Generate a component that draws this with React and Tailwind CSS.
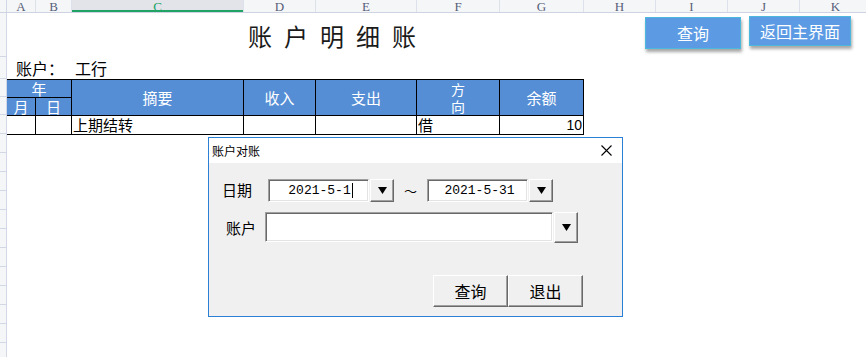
import React from "react";

const cols = [
  { id: "A", w: "w-[29px]" },
  { id: "B", w: "w-[36px]" },
  { id: "C", w: "w-[172px]", active: true },
  { id: "D", w: "w-[72px]" },
  { id: "E", w: "w-[101px]" },
  { id: "F", w: "w-[83px]" },
  { id: "G", w: "w-[84px]" },
  { id: "H", w: "w-[72px]" },
  { id: "I", w: "w-[72px]" },
  { id: "J", w: "w-[72px]" },
  { id: "K", w: "w-[72px]" },
];

const rowHeights = ["h-[44px]", "h-[22px]", "h-[18px]", "h-[18px]", "h-[19px]", "h-[19px]", "h-[19px]", "h-[19px]", "h-[19px]", "h-[19px]", "h-[19px]", "h-[19px]", "h-[19px]", "h-[19px]", "h-[19px]", "h-[19px]", "h-[19px]", "h-[19px]"];

const cjk = "font-['Noto_Sans_CJK_SC',sans-serif]";

const Arrow = () => (
  <svg width="9" height="7" viewBox="0 0 9 7">
    <polygon points="0,0 9,0 4.5,7" fill="#000" />
  </svg>
);

const DropBtn = ({ h }) => (
  <div
    className={`w-[24px] ${h} ml-px shrink-0 flex items-center justify-center bg-[#f0f0f0] border border-t-white border-l-white border-r-[#696969] border-b-[#696969] shadow-[inset_-1px_-1px_0_#a0a0a0]`}
  >
    <Arrow />
  </div>
);

const Field = ({ w, h, children }) => (
  <div
    className={`${w} ${h} shrink-0 flex items-center justify-center bg-white border border-t-[#a0a0a0] border-l-[#a0a0a0] border-r-white border-b-white shadow-[inset_1px_1px_0_#696969,inset_-1px_-1px_0_#e3e3e3] font-['Liberation_Mono',monospace] text-[13px] text-black`}
  >
    {children}
  </div>
);

const WinButton = ({ children }) => (
  <div className="w-[75px] h-[32px] flex items-center justify-center bg-[#f0f0f0] border border-t-white border-l-white border-r-[#696969] border-b-[#696969] shadow-[inset_-1px_-1px_0_#a0a0a0] text-[16px] text-black">
    {children}
  </div>
);

const App = () => {
  return (
    <div className={`relative w-[866px] h-[357px] overflow-hidden bg-white ${cjk}`}>
      {/* column headers */}
      <div className="flex h-[13px] bg-[#f5f6f8] border-b border-[#cdd3e0]">
        <div className="w-[7px] shrink-0 border-r border-[#d3d8e6]" />
        {cols.map((c) => (
          <div
            key={c.id}
            className={`${c.w} shrink-0 flex items-center justify-center border-r border-[#dde1ea] font-['Liberation_Serif',serif] text-[13px] leading-none ${
              c.active
                ? "bg-[#e2e4e9] text-[#21a366] shadow-[inset_0_-2px_0_#21a366]"
                : "text-[#556078]"
            }`}
          >
            {c.id}
          </div>
        ))}
      </div>

      <div className="flex">
        {/* row gutter */}
        <div className="w-[7px] shrink-0 bg-[#f5f6f8] border-r border-[#d3d8e6] flex flex-col">
          {rowHeights.map((h, i) => (
            <div key={i} className={`${h} shrink-0 border-b border-[#d3d8e6]`} />
          ))}
        </div>

        <div className="flex-1">
          {/* title row */}
          <div className="flex h-[44px]">
            <div className="w-[577px] shrink-0 pl-[241px] pt-[8px] text-[24px] leading-[30px] tracking-[12px] text-[#1a1a1a]">
              账户明细账
            </div>
            <button className="ml-[61px] mt-[4px] w-[96px] h-[32px] shrink-0 bg-[#5c9be4] border border-[#4cb8dc] shadow-[1px_3px_3px_rgba(0,0,0,0.35)] text-white text-[16px]">
              查询
            </button>
            <button className="ml-[8px] mt-[3px] w-[102px] h-[30px] shrink-0 bg-[#5c9be4] border border-[#4cb8dc] shadow-[1px_3px_3px_rgba(0,0,0,0.35)] text-white text-[16px]">
              返回主界面
            </button>
          </div>

          {/* account row */}
          <div className="flex items-end h-[22px] pb-[1px] text-[16px] leading-[20px] text-black">
            <span className="ml-[9px] w-[59px]">账户：</span>
            <span>工行</span>
          </div>

          {/* table */}
          <div className="grid grid-cols-[29px_36px_172px_72px_101px_83px_84px] grid-rows-[18px_18px_19px] border-t border-black w-[577px] text-[15px] leading-none">
            <div className="col-span-2 bg-[#558ed5] text-white border-r border-b border-black flex items-center justify-center">年</div>
            <div className="row-span-2 bg-[#558ed5] text-white border-r border-b border-black flex items-center justify-center">摘要</div>
            <div className="row-span-2 bg-[#558ed5] text-white border-r border-b border-black flex items-center justify-center">收入</div>
            <div className="row-span-2 bg-[#558ed5] text-white border-r border-b border-black flex items-center justify-center">支出</div>
            <div className="row-span-2 bg-[#558ed5] text-white border-r border-b border-black flex flex-col items-center justify-center text-[14px] leading-[17px]">
              <span>方</span>
              <span>向</span>
            </div>
            <div className="row-span-2 bg-[#558ed5] text-white border-r border-b border-black flex items-center justify-center">余额</div>
            <div className="bg-[#558ed5] text-white border-r border-b border-black flex items-center justify-center">月</div>
            <div className="bg-[#558ed5] text-white border-r border-b border-black flex items-center justify-center">日</div>

            <div className="border-r border-b border-black" />
            <div className="border-r border-b border-black" />
            <div className="border-r border-b border-black overflow-hidden pl-[1px] text-[15px] leading-[18px]">上期结转</div>
            <div className="border-r border-b border-black" />
            <div className="border-r border-b border-black" />
            <div className="border-r border-b border-black overflow-hidden pl-[1px] text-[15px] leading-[18px]">借</div>
            <div className="border-r border-b border-black flex items-end justify-end pr-[1px] font-['Liberation_Sans',sans-serif] text-[14px] leading-[17px]">10</div>
          </div>
        </div>
      </div>

      {/* dialog */}
      <div className="absolute left-[208px] top-[137px] w-[415px] h-[180px] border border-[#2b7fd4] bg-[#f0f0f0] flex flex-col">
        <div className="h-[25px] bg-white flex items-center justify-between pl-[3px] pr-[10px]">
          <span className="text-[12px] text-black">账户对账</span>
          <svg width="11" height="11" viewBox="0 0 11 11">
            <path d="M0.5 0.5 L10.5 10.5 M10.5 0.5 L0.5 10.5" stroke="#000" strokeWidth="1.1" />
          </svg>
        </div>

        <div className="flex flex-col pt-[16px]">
          <div className="flex items-center">
            <span className="w-[59px] pl-[13px] text-[15px] text-black">日期</span>
            <Field w="w-[101px]" h="h-[23px]">
              <span className="pl-[4px]">2021-5-1</span>
              <span className="inline-block w-px h-[15px] bg-black ml-px" />
            </Field>
            <DropBtn h="h-[23px]" />
            <span className="w-[33px] text-center text-[13px] text-black">～</span>
            <Field w="w-[101px]" h="h-[23px]">
              <span className="pl-[4px]">2021-5-31</span>
            </Field>
            <DropBtn h="h-[23px]" />
          </div>

          <div className="flex items-start mt-[10px]">
            <span className="w-[56px] pl-[17px] pt-[5px] text-[15px] text-black">账户</span>
            <Field w="w-[288px]" h="h-[30px]" />
            <DropBtn h="h-[31px]" />
          </div>

          <div className="flex justify-end mt-[32px] pr-[39px]">
            <WinButton>查询</WinButton>
            <WinButton>退出</WinButton>
          </div>
        </div>
      </div>
    </div>
  );
};

export default App;
